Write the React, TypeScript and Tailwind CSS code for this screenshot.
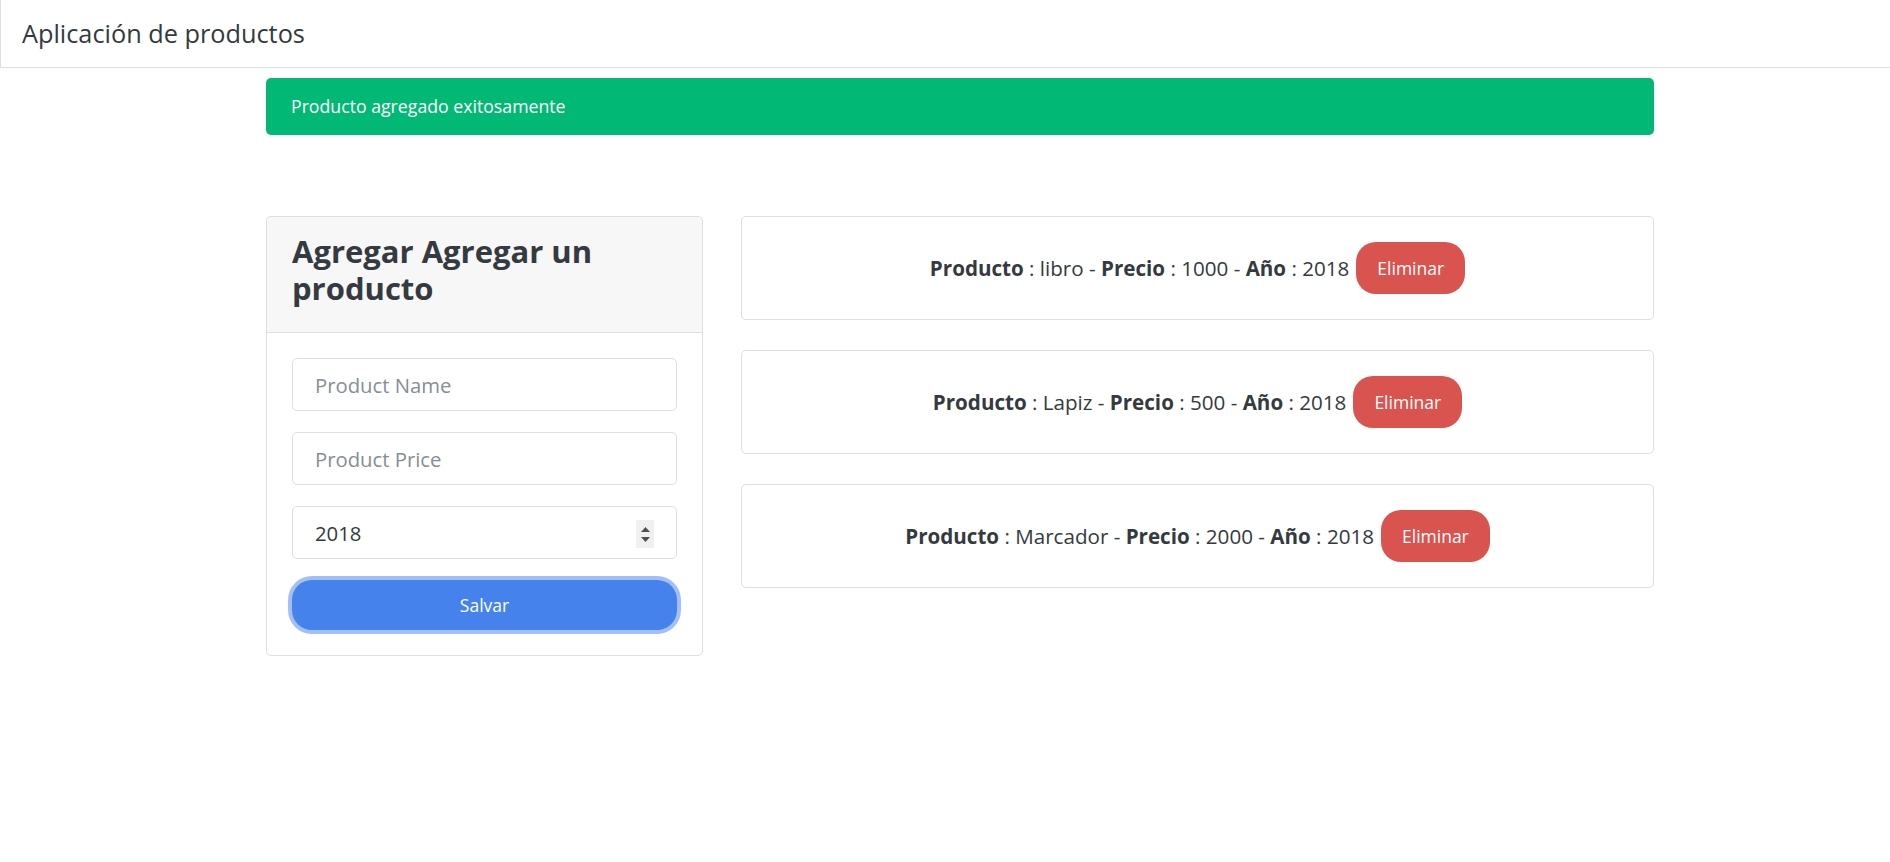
import React from "react";

const products = [
  { name: "libro", price: "1000", year: "2018" },
  { name: "Lapiz", price: "500", year: "2018" },
  { name: "Marcador", price: "2000", year: "2018" },
];

function Field({ placeholder, value }: { placeholder?: string; value?: string }) {
  return (
    <div className="relative mb-[21px] h-[53px] rounded-[5px] border border-[#dfdfdf] bg-white">
      <input
        readOnly
        type="text"
        placeholder={placeholder}
        defaultValue={value}
        className="h-full w-full rounded-[5px] bg-transparent px-[22px] text-[20.3px] text-[#343a40] outline-none placeholder:text-[#868e96]"
      />
      {value !== undefined && (
        <div className="absolute right-[22px] top-[13px] flex h-[28px] w-[18px] flex-col items-center justify-center gap-[5px] bg-[#f0f0f0]">
          <svg width="9" height="5" viewBox="0 0 9 5">
            <path d="M0 5 L4.5 0 L9 5 Z" fill="#505050" />
          </svg>
          <svg width="9" height="5" viewBox="0 0 9 5">
            <path d="M0 0 L4.5 5 L9 0 Z" fill="#505050" />
          </svg>
        </div>
      )}
    </div>
  );
}

export default function App() {
  return (
    <div className="min-h-[862px] bg-white font-['Open_Sans',sans-serif] text-[#343a40]">
      <nav className="flex h-[68px] w-full items-center border-b border-l border-[#dfdfdf] bg-white px-[21px]">
        <span className="text-[25.3px] text-[#343a40]">Aplicación de productos</span>
      </nav>

      <div className="ml-[266px] w-[1388px]">
        <div className="mt-[10px] flex h-[57px] items-center rounded-[5px] bg-[#02b875] px-[25px] text-[17.7px] text-white">
          Producto agregado exitosamente
        </div>

        <div className="mt-[81px] grid grid-cols-[437px_1fr] gap-x-[38px] items-start">
          <div className="rounded-[5px] border border-[#dfdfdf] bg-white">
            <div className="rounded-t-[5px] border-b border-[#dfdfdf] bg-[#f7f7f7] px-[25px] pb-[15px] pt-[16px]">
              <h4 className="mb-[10px] text-[31px] font-bold leading-[37px] text-[#343a40]">
                Agregar Agregar un producto
              </h4>
            </div>
            <div className="p-[25px]">
              <Field placeholder="Product Name" />
              <Field placeholder="Product Price" />
              <Field value="2018" />
              <button className="h-[50px] w-full rounded-[20px] bg-[#4582ec] text-[17.5px] text-white shadow-[0_0_0_4px_rgba(69,130,236,0.5)]">
                Salvar
              </button>
            </div>
          </div>

          <div className="flex flex-col gap-[30px]">
            {products.map((p) => (
              <div key={p.name} className="rounded-[5px] border border-[#dfdfdf] bg-white">
                <div className="flex items-center justify-center p-[25px] text-[20.6px] text-[#343a40]">
                  <span>
                    <b>Producto</b> : {p.name} - <b>Precio</b> : {p.price} - <b>Año</b> : {p.year}
                  </span>
                  <button className="ml-[7px] h-[52px] rounded-[20px] bg-[#d9534f] px-[21px] text-[17.5px] text-white">
                    Eliminar
                  </button>
                </div>
              </div>
            ))}
          </div>
        </div>
      </div>
    </div>
  );
}
